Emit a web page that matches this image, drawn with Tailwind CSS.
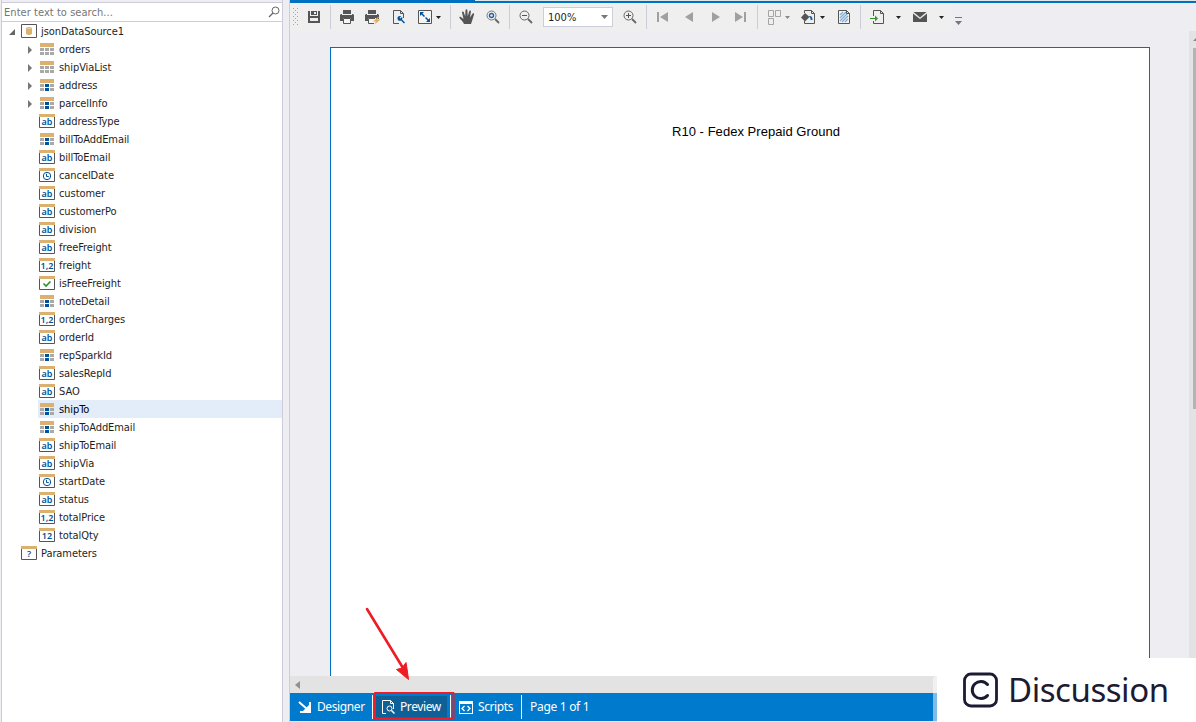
<!DOCTYPE html>
<html lang="en">
  <head>
    <meta charset="UTF-8" />
    <meta name="viewport" content="width=device-width, initial-scale=1.0" />
    <title>Report Designer - Preview</title>
    <script src="https://cdn.jsdelivr.net/npm/@tailwindcss/browser@4"></script>
  </head>

  <body
    class="relative flex h-[722px] w-[1196px] overflow-hidden bg-[#ededf2] font-['DejaVu_Sans_Condensed','DejaVu_Sans',sans-serif] text-[11px] text-[#1e1e1e]"
  >
    <!-- Icon sprite -->
    <svg class="hidden">
      <symbol id="i-database" viewBox="0 0 16 16">
        <path d="M.5 1.5h15v13H.5z" fill="#fff" stroke="#555" />
        <path d="M5 5v6q3 2 6 0V5q-3-2-6 0z" fill="#dcb06f" />
        <path d="M5.5 5q2.5 1.5 5 0" fill="none" stroke="#f1dcb9" stroke-width=".7" />
      </symbol>
      <symbol id="i-table" viewBox="0 0 16 16">
        <path d="M1 2h14v4H1z" fill="#dcb06f" />
        <path d="M1 7h4v3H1zm5 0h4v3H6zm5 0h4v3h-4zM1 11h4v3H1zm5 0h4v3H6zm5 0h4v3h-4z" fill="#a9a9a9" />
      </symbol>
      <symbol id="i-object" viewBox="0 0 16 16">
        <path d="M1 2h14v4H1z" fill="#dcb06f" />
        <path d="M1 7h4v3H1zm10 0h4v3h-4zM1 11h4v3H1zm10 0h4v3h-4z" fill="#a9a9a9" />
        <path d="M6 7h4v3H6zm0 4h4v3H6z" fill="#00529b" />
      </symbol>
      <symbol id="i-field" viewBox="0 0 16 16">
        <path d="M.5 3v11.5h15V3" fill="#fff" stroke="#555" />
        <path d="M0 1h16v3H0z" fill="#dcb06f" />
      </symbol>
      <symbol id="i-clock" viewBox="0 0 16 16">
        <circle cx="8" cy="9" r="3.7" fill="none" stroke="#00529b" />
        <path d="M7.5 6.8v2.7h2.3" fill="none" stroke="#00529b" />
      </symbol>
      <symbol id="i-check" viewBox="0 0 16 16">
        <path d="M4.500 8.500 7 11l4.500-4.500" fill="none" stroke="#2f8f2f" stroke-width="1.600" />
      </symbol>

      <symbol id="i-save" viewBox="0 0 16 16">
        <path fill-rule="evenodd" d="M2 2h2v5h8V2h2v12H2zM4 9v3h8V9zM5 2h6v4H5zM8 3v2h2V3z" fill="#555" />
      </symbol>
      <symbol id="i-print" viewBox="0 0 16 16">
        <path d="M4 1h8v4H4z" fill="#555" />
        <path fill-rule="evenodd" d="M2 5h1v1h10V5h1l1 1v6h-3V9H4v3H1V6z" fill="#555" />
        <path d="M4.500 9.500h7v5h-7z" fill="#f5f5f5" stroke="#555" />
      </symbol>
      <symbol id="i-quickprint" viewBox="0 0 16 16">
        <path d="M3 1h8v4H3zM1 5h1v1h10V5h1l1 1v4h-3V9H3v3H0V6z" fill="#555" />
        <path d="M9 14.500H3.500v-5H10" fill="#f5f5f5" stroke="#555" />
        <path d="m13 8-5 4.500h3L9.500 15.500l6-5h-3L14 8z" fill="#e0ad62" />
      </symbol>
      <symbol id="i-setup" viewBox="0 0 16 16">
        <path d="M8 14.500H2.500v-13h7l3 3V9M9.500 1.500v3h3" fill="none" stroke="#555" />
        <path d="M10 7.500c-1.500-1-4 0-3.500 2.500.5 2 2.500 2 3.500 1.500l3 3 1-1-3-3c.5-1 .5-2 0-2.500L9.500 9.500 8.500 9z" fill="#00529b" />
      </symbol>
      <symbol id="i-scale" viewBox="0 0 16 16">
        <path d="M1.500 1.500h13v13h-13z" fill="#f5f5f5" stroke="#555" />
        <path d="M3 3h4L3 7zm10 10H9l4-4z" fill="#00529b" />
        <path d="m4.500 4.500 7 7" stroke="#00529b" stroke-width="1.500" stroke-dasharray="4.200 1.500" />
      </symbol>
      <symbol id="i-hand" viewBox="0 0 16 16">
        <path d="M5 15C4 12.500 2 11 .5 9c-.5-1 .8-1.500 1.700-.8L4.500 10 3 3.500c-.2-1.200 1.300-1.500 1.700-.4L6.200 7.500 6.500 1.300C6.600 0 8.300 0 8.400 1.300L8.700 7.300l1.500-5c.4-1.200 1.900-.8 1.700.4L11 8.500l2.500-3.700c.7-1 2-.2 1.500.9C14 8.500 13.500 11 12 15z" fill="#555" />
      </symbol>
      <symbol id="i-magnifier" viewBox="0 0 16 16">
        <circle cx="6.500" cy="6.500" r="4.500" fill="none" stroke="#777" />
        <path d="m10 10 4 4" stroke="#666" stroke-width="1.800" />
        <circle cx="6.500" cy="6.500" r="2" fill="#efefef" stroke="#1a62a8" stroke-width="1.400" />
      </symbol>
      <symbol id="i-zoomout" viewBox="0 0 16 16">
        <circle cx="6.500" cy="6.500" r="4.500" fill="none" stroke="#666" />
        <path d="m10 10 4 4" stroke="#666" stroke-width="1.800" />
        <path d="M4 6.500h5" stroke="#555" />
      </symbol>
      <symbol id="i-zoomin" viewBox="0 0 16 16">
        <circle cx="6.500" cy="6.500" r="4.500" fill="none" stroke="#666" />
        <path d="m10 10 4 4" stroke="#666" stroke-width="1.800" />
        <path d="M4 6.500h5M6.500 4v5" stroke="#555" />
      </symbol>
      <symbol id="i-first" viewBox="0 0 16 16">
        <path d="M2 3h2v10H2zm11 0v10L5 8z" fill="#a0a0a0" />
      </symbol>
      <symbol id="i-prev" viewBox="0 0 16 16">
        <path d="M12 3v10L4 8z" fill="#a0a0a0" />
      </symbol>
      <symbol id="i-next" viewBox="0 0 16 16">
        <path d="M5 3v10l8-5z" fill="#a0a0a0" />
      </symbol>
      <symbol id="i-last" viewBox="0 0 16 16">
        <path d="M11 3h2v10h-2zM2 3v10l8-5z" fill="#a0a0a0" />
      </symbol>
      <symbol id="i-pages" viewBox="0 0 16 16">
        <path d="M2.500 1.500h5v6h-5zm7 0h5v6h-5zm-7 8h5v6h-5z" fill="none" stroke="#a5a5a5" />
      </symbol>
      <symbol id="i-color" viewBox="0 0 16 16">
        <path d="M4.500 4V1.500h7l3 3v10h-10V12M11.500 1.500v3h3" fill="none" stroke="#555" />
        <path d="m5 4 4.500 4L5 12.500 1 8.500z" fill="#555" />
        <path d="M9 7c3-.5 3.500 1.500 3.500 4h-2V9.500z" fill="#0f5fb0" />
      </symbol>
      <symbol id="i-watermark" viewBox="0 0 16 16">
        <path d="M2.500 1.500h8l3 3v10h-11z" fill="#f5f5f5" stroke="#555" />
        <path d="m4 6 3-3M4 9l6-6M4 12l8-8M6 13l6-6M9 13l3-3" stroke="#7fadd6" stroke-width="1.300" />
        <path d="M10.500 1.500v3h3" fill="none" stroke="#555" />
      </symbol>
      <symbol id="i-export" viewBox="0 0 16 16">
        <path d="M4.500 7V1.500h7l3 3v10h-10V12M11.500 1.500v3h3" fill="none" stroke="#555" />
        <path d="M1 9.500h6" stroke="#37932f" />
        <path d="M6 6.500v6l3-3z" fill="#37932f" />
      </symbol>
      <symbol id="i-mail" viewBox="0 0 16 16">
        <path d="M1 4.500 8 10l7-5.500V13H1zM1.500 3h13L8 8.500z" fill="#555" />
      </symbol>
    </svg>

    <!-- Data source panel -->
    <aside class="mr-[6px] ml-px w-[282px] shrink-0 border-x border-[#ccccdb] bg-white">
      <div class="h-[3px] border-b border-[#ccccdb] bg-[#ededf2]"></div>
      <div class="flex h-[19px] items-center justify-between border-b border-[#ccccdb] pr-0.5 pl-0.5">
        <span class="text-[11px] leading-none tracking-[0.05px] text-[#757575]">Enter text to search...</span>
        <svg class="size-3" viewBox="0 0 12 12" fill="none" stroke="#666">
          <circle cx="7.500" cy="4.500" r="3.500" />
          <path d="M5 7 1 11" stroke-width="1.300" />
        </svg>
      </div>
      <div id="tree"></div>
    </aside>

    <!-- Preview area -->
    <main class="flex min-w-0 flex-1 flex-col border-l border-[#ccccdb]">
      <div class="h-[3px] bg-[#0070c0]">
        <div class="ml-[185px] h-px bg-[#dfe7ea]"></div>
      </div>

      <!-- Toolbar -->
      <div class="flex h-7 shrink-0 items-center">
        <div class="flex h-7 w-[662px] shrink-0 items-center bg-[#efefef] pl-[3px]">
          <svg class="mr-[7px] h-[18px] w-[6px]" viewBox="0 0 6 18" fill="#a6a6a6">
            <path d="M0 0h1v1H0zM4 0h1v1H4zM2 2h1v1H2zM0 4h1v1H0zM4 4h1v1H4zM2 6h1v1H2zM0 8h1v1H0zM4 8h1v1H4zM2 10h1v1H2zM0 12h1v1H0zM4 12h1v1H4zM2 14h1v1H2zM0 16h1v1H0zM4 16h1v1H4z" />
          </svg>
          <svg class="mr-[8px] size-4"><use href="#i-save" /></svg>
          <span class="mr-[8px] h-6 w-px bg-[#ccccdb]"></span>
          <svg class="mr-[10px] size-4"><use href="#i-print" /></svg>
          <svg class="mr-[10px] size-4"><use href="#i-quickprint" /></svg>
          <svg class="mr-[10px] size-4"><use href="#i-setup" /></svg>
          <svg class="mr-[3px] size-4"><use href="#i-scale" /></svg>
          <svg class="mr-[9px] h-[3px] w-[5px]" viewBox="0 0 5 3"><path d="M0 0h5L2.500 3z" fill="#222" /></svg>
          <span class="mr-[8px] h-6 w-px bg-[#ccccdb]"></span>
          <svg class="mr-[10px] size-4"><use href="#i-hand" /></svg>
          <svg class="mr-[8px] size-4"><use href="#i-magnifier" /></svg>
          <span class="mr-[8px] h-6 w-px bg-[#ccccdb]"></span>
          <svg class="mr-[9px] size-4"><use href="#i-zoomout" /></svg>
          <div class="mr-[9px] flex h-5 w-[70px] items-center justify-between border border-[#ccccdb] bg-white pr-[4px] pl-[4px]">
            <span class="text-[11px] leading-none">100%</span>
            <svg class="h-[4px] w-[7px]" viewBox="0 0 7 4"><path d="M0 0h7L3.500 4z" fill="#777" /></svg>
          </div>
          <svg class="mr-[8px] size-4"><use href="#i-zoomin" /></svg>
          <span class="mr-[8px] h-6 w-px bg-[#ccccdb]"></span>
          <svg class="mr-[10px] size-4"><use href="#i-first" /></svg>
          <svg class="mr-[10px] size-4"><use href="#i-prev" /></svg>
          <svg class="mr-[10px] size-4"><use href="#i-next" /></svg>
          <svg class="mr-[8px] size-4"><use href="#i-last" /></svg>
          <span class="mr-[8px] h-6 w-px bg-[#ccccdb]"></span>
          <svg class="mr-[3px] size-4"><use href="#i-pages" /></svg>
          <svg class="mr-[10px] h-[3px] w-[5px]" viewBox="0 0 5 3"><path d="M0 0h5L2.500 3z" fill="#888" /></svg>
          <svg class="mr-[4px] size-4"><use href="#i-color" /></svg>
          <svg class="mr-[11px] h-[3px] w-[5px]" viewBox="0 0 5 3"><path d="M0 0h5L2.500 3z" fill="#222" /></svg>
          <svg class="mr-[8px] size-4"><use href="#i-watermark" /></svg>
          <span class="mr-[8px] h-6 w-px bg-[#ccccdb]"></span>
          <svg class="mr-[11px] size-4"><use href="#i-export" /></svg>
          <svg class="mr-[11px] h-[3px] w-[5px]" viewBox="0 0 5 3"><path d="M0 0h5L2.500 3z" fill="#222" /></svg>
          <svg class="mr-[11px] size-4"><use href="#i-mail" /></svg>
          <svg class="h-[3px] w-[5px]" viewBox="0 0 5 3"><path d="M0 0h5L2.500 3z" fill="#222" /></svg>
        </div>
        <svg class="mt-2 ml-[3px] h-2 w-[7px]" viewBox="0 0 7 8">
          <path d="M0 0h7v1H0zM0 4h7L3.500 8z" fill="#777" />
        </svg>
      </div>

      <!-- Report page -->
      <div class="flex min-h-0 flex-1 justify-between">
        <div class="mt-4 ml-10 w-[820px] border border-b-0 border-[#0070c0] bg-white">
          <p
            class="mt-[76px] ml-[341px] font-['Liberation_Sans',Arial,sans-serif] text-[13px] leading-4 tracking-[0.04px] whitespace-nowrap text-black"
          >R10 - Fedex Prepaid Ground</p>
        </div>
        <div class="flex w-[7px] flex-col items-end bg-[#e3e3e6]">
          <svg class="mt-[7px] h-[3px] w-[3px]" viewBox="0 0 3 3"><path d="M0 3 3 0v3z" fill="#888" /></svg>
          <div class="mt-[7px] h-[361px] w-[3px] bg-[#b4b4b7]"></div>
        </div>
      </div>
      <div class="flex h-[17px] shrink-0 items-center bg-[#e3e3e3] pl-[5px]">
        <svg class="h-2 w-[5px]" viewBox="0 0 5 8"><path d="M5 0v8L0 4z" fill="#909090" /></svg>
      </div>

      <!-- View tabs -->
      <div
        class="flex h-7 shrink-0 items-center bg-[#007acc] font-['Noto_Sans','Open_Sans',sans-serif] text-xs tracking-[-0.4px] text-white"
      >
        <div class="flex h-7 w-[82px] items-center pl-2">
          <svg class="mr-[5px] size-[14px]" viewBox="0 0 14 14">
            <path d="M1 2l8 7M12 2v10H2" fill="none" stroke="#fff" stroke-width="2" />
            <path d="M13 3v10H3z" fill="#fff" />
          </svg>
          <span>Designer</span>
        </div>
        <span class="mr-[3px] h-6 w-px bg-white"></span>
        <div class="flex h-[23px] w-[71px] items-center bg-[#0e6198] pl-[6px]">
          <svg class="mr-[5px] h-[14px] w-[13px]" viewBox="0 0 13 14" fill="none" stroke="#fff">
            <path d="M4 13.500H.5V.5h8l3 3V9M8.500.5v3h3" />
            <circle cx="7.500" cy="8.500" r="2.500" />
            <path d="m9.500 10.500 3 3" stroke-width="1.500" />
          </svg>
          <span>Preview</span>
        </div>
        <span class="ml-[3px] h-6 w-px bg-white"></span>
        <div class="ml-[3px] flex h-7 w-[67px] items-center pl-[5px]">
          <svg class="mr-[5px] h-[13px] w-[14px]" viewBox="0 0 14 13">
            <path fill-rule="evenodd" d="M0 0h14v13H0zM1 3v9h12V3z" fill="#fff" />
            <path d="M5.500 5 3 7.500 5.500 10m3-5L11 7.500 8.500 10" fill="none" stroke="#fff" stroke-width="1.300" />
          </svg>
          <span>Scripts</span>
        </div>
        <span class="mr-2 h-6 w-px bg-white"></span>
        <span class="tracking-[-0.3px]">Page 1 of 1</span>
      </div>
      <div class="h-px shrink-0 bg-[#dfe7ea]"></div>
    </main>

    <!-- Callout on the Preview tab -->
    <svg class="absolute top-[600px] left-[360px] h-[122px] w-[100px]" viewBox="0 0 100 122">
      <path d="M7 9 43 68" stroke="#ee1c25" stroke-width="2.600" stroke-linecap="round" />
      <path d="M48.500 79.500 36.500 69.500l5.500-1.500 4-5.500 1 6z" fill="#ee1c25" stroke="#ee1c25" />
      <path d="M15 93h78.500v25.500H15z" fill="none" stroke="#ee1c25" stroke-width="2" stroke-linejoin="round" />
    </svg>

    <!-- Watermark -->
    <div
      class="absolute top-[658px] left-[937px] flex h-16 w-[259px] items-center bg-white pl-[26px] text-[#1c1b33]"
    >
      <svg class="mr-[9px] size-9" viewBox="0 0 36 36" fill="none" stroke="#1c1b33">
        <rect x="1.500" y="2" width="32" height="32" rx="6.500" stroke-width="2.800" />
        <path d="M24.500 12.500a8.600 8.600 0 1 0 0 11" stroke-width="3" stroke-linecap="round" />
      </svg>
      <span
        class="-mt-0.5 font-['Noto_Sans','Open_Sans',sans-serif] text-[33px] leading-none tracking-[-0.45px]"
      >Discussion</span>
    </div>
    <div class="absolute top-[676px] left-[933px] h-[45px] w-1 rounded-tl bg-white/50"></div>

    <script>
      // [level, icon, label, expander]
      const nodes = [
        [0, 'database', 'jsonDataSource1', 'open'],
        [1, 'table', 'orders', 'closed'],
        [1, 'table', 'shipViaList', 'closed'],
        [1, 'object', 'address', 'closed'],
        [1, 'object', 'parcelInfo', 'closed'],
        [1, 'ab', 'addressType'],
        [1, 'object', 'billToAddEmail'],
        [1, 'ab', 'billToEmail'],
        [1, 'clock', 'cancelDate'],
        [1, 'ab', 'customer'],
        [1, 'ab', 'customerPo'],
        [1, 'ab', 'division'],
        [1, 'ab', 'freeFreight'],
        [1, '1,2', 'freight'],
        [1, 'check', 'isFreeFreight'],
        [1, 'object', 'noteDetail'],
        [1, '1,2', 'orderCharges'],
        [1, 'ab', 'orderId'],
        [1, 'object', 'repSparkId'],
        [1, 'ab', 'salesRepId'],
        [1, 'ab', 'SAO'],
        [1, 'object', 'shipTo'],
        [1, 'object', 'shipToAddEmail'],
        [1, 'ab', 'shipToEmail'],
        [1, 'ab', 'shipVia'],
        [1, 'clock', 'startDate'],
        [1, 'ab', 'status'],
        [1, '1,2', 'totalPrice'],
        [1, '12', 'totalQty'],
        [0, '?', 'Parameters'],
      ];

      const arrows = {
        open: '<path d="M7 3v6H1z" fill="#666" />',
        closed: '<path d="M2 2v8l4-4z" fill="#777" />',
      };

      function icon(name) {
        if (['database', 'table', 'object'].includes(name)) {
          return `<svg class="size-4"><use href="#i-${name}" /></svg>`;
        }
        const inner = ['clock', 'check'].includes(name)
          ? `<use href="#i-${name}" />`
          : `<text x="8" y="12" text-anchor="middle" fill="#00529b" class="font-['Noto_Sans'] text-[9px] font-semibold">${name}</text>`;
        return `<svg class="size-4" viewBox="0 0 16 16"><use href="#i-field" />${inner}</svg>`;
      }

      document.getElementById('tree').innerHTML = nodes
        .map(
          ([level, type, label, state]) => `
          <div class="flex h-[18px] ${level ? 'pl-[23px]' : 'pl-[5px]'}">
            <svg class="mt-1 mr-1 ml-px h-[10px] w-[9px]" viewBox="0 0 9 10">${arrows[state] || ''}</svg>
            <div class="-ml-px flex flex-1 items-center pl-px ${label == 'shipTo' ? 'bg-[#e3edf9] text-black' : ''}">
              ${icon(type)}
              <span class="ml-1 leading-none tracking-[-0.08px] whitespace-nowrap">${label}</span>
            </div>
          </div>`
        )
        .join('');
    </script>
  </body>
</html>
